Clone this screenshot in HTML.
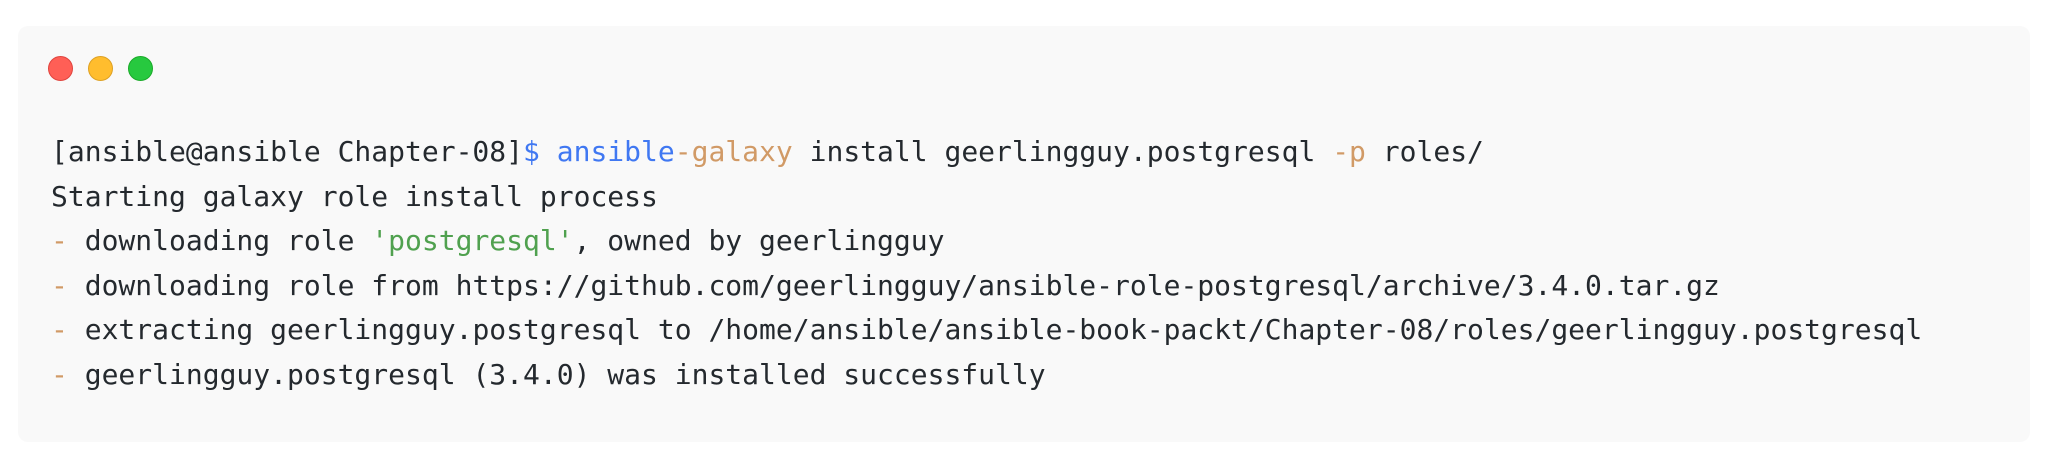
<!DOCTYPE html>
<html><head><meta charset="utf-8"><style>
html,body{margin:0;padding:0;background:#fff;width:2048px;height:468px;overflow:hidden}
.box{position:absolute;left:18px;top:26px;width:2012px;height:416px;background:#f9f9f9;border-radius:10px}
.d{position:absolute;top:55.5px;width:25px;height:25px;border-radius:50%;box-sizing:border-box}
pre{position:absolute;left:51px;top:130px;margin:0;font-family:"DejaVu Sans Mono","Liberation Mono",monospace;font-size:28px;line-height:44.6px;color:#24292e}
.b{color:#4078f2}.o{color:#d19a66}.g{color:#50a14f}
</style></head><body>
<div class="box"></div>
<div class="d" style="left:47.5px;background:#ff5f56;border:1px solid #e0443e"></div>
<div class="d" style="left:87.5px;background:#ffbd2e;border:1px solid #dea123"></div>
<div class="d" style="left:127.5px;background:#27c93f;border:1px solid #1aab29"></div>
<pre>[ansible@ansible Chapter-08]<span class="b">$ ansible</span><span class="o">-galaxy</span> install geerlingguy.postgresql <span class="o">-p</span> roles/
Starting galaxy role install process
<span class="o">-</span> downloading role <span class="g">'postgresql'</span>, owned by geerlingguy
<span class="o">-</span> downloading role from https://github.com/geerlingguy/ansible-role-postgresql/archive/3.4.0.tar.gz
<span class="o">-</span> extracting geerlingguy.postgresql to /home/ansible/ansible-book-packt/Chapter-08/roles/geerlingguy.postgresql
<span class="o">-</span> geerlingguy.postgresql (3.4.0) was installed successfully</pre>
</body></html>
